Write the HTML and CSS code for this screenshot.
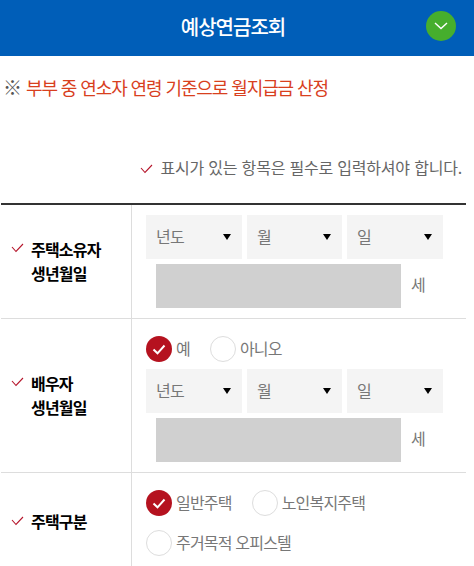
FILE: index.html
```html
<!DOCTYPE html>
<html lang="ko">
<head>
  <meta charset="UTF-8" />
  <meta name="viewport" content="width=device-width, initial-scale=1.0"/>
  <title>예상연금조회</title>
  <link rel="stylesheet" href="styles.css">
</head>
<body>

  <header class="top">
    <h1>예상연금조회</h1>
    <button class="toggle" aria-label="접기">
      <svg width="14" height="8" viewBox="0 0 14 8"><path d="M1 1l6 5.5L13 1" fill="none" stroke="#fff" stroke-width="1.4"/></svg>
    </button>
  </header>

  <p class="notice"><span class="mark">※</span><span>부부 중 연소자 연령 기준으로 월지급금 산정</span></p>

  <p class="required">
    <svg class="tick" width="13" height="10" viewBox="0 0 13 10"><path d="M1 4l4 4.5L12 1" fill="none" stroke="#b5152b" stroke-width="1.1"/></svg>
    표시가 있는 항목은 필수로 입력하셔야 합니다.
  </p>

  <div class="form">
    <div class="row">
      <div class="label">
        <svg class="tick" width="13" height="10" viewBox="0 0 13 10"><path d="M1 4l4 4.5L12 1" fill="none" stroke="#b5152b" stroke-width="1.1"/></svg>
        <span>주택소유자<br>생년월일</span>
      </div>
      <div class="field">
        <div class="dates">
          <div class="select">년도<i></i></div>
          <div class="select">월<i></i></div>
          <div class="select">일<i></i></div>
        </div>
        <div class="age"><div class="age-box"></div><span>세</span></div>
      </div>
    </div>

    <div class="row">
      <div class="label">
        <svg class="tick" width="13" height="10" viewBox="0 0 13 10"><path d="M1 4l4 4.5L12 1" fill="none" stroke="#b5152b" stroke-width="1.1"/></svg>
        <span>배우자<br>생년월일</span>
      </div>
      <div class="field spouse">
        <div class="radios">
          <label class="radio on"><b><svg width="14" height="11" viewBox="0 0 14 11"><path d="M1.5 5.5l4 3.8L12.5 1.5" fill="none" stroke="#fff" stroke-width="2"/></svg></b><span>예</span></label>
          <label class="radio"><b></b><span>아니오</span></label>
        </div>
        <div class="dates">
          <div class="select">년도<i></i></div>
          <div class="select">월<i></i></div>
          <div class="select">일<i></i></div>
        </div>
        <div class="age"><div class="age-box"></div><span>세</span></div>
      </div>
    </div>

    <div class="row">
      <div class="label">
        <svg class="tick" width="13" height="10" viewBox="0 0 13 10"><path d="M1 4l4 4.5L12 1" fill="none" stroke="#b5152b" stroke-width="1.1"/></svg>
        <span>주택구분</span>
      </div>
      <div class="field house">
        <div class="radios">
          <label class="radio on"><b><svg width="14" height="11" viewBox="0 0 14 11"><path d="M1.5 5.5l4 3.8L12.5 1.5" fill="none" stroke="#fff" stroke-width="2"/></svg></b><span>일반주택</span></label>
          <label class="radio"><b></b><span>노인복지주택</span></label>
          <label class="radio"><b></b><span>주거목적 오피스텔</span></label>
        </div>
      </div>
    </div>
  </div>

</body>
</html>
```

FILE: styles.css
```css
html, body {
  height: 566px;
  overflow: hidden;
}

body {
  margin: 0;
  font-family: "Noto Sans CJK KR", "Noto Sans", sans-serif;
  background: #fff;
  color: #666;
}

.top {
  height: 56px;
  background: #005eb8;
  position: relative;
  padding-right: 8px;
  display: flex;
  align-items: center;
  justify-content: center;
}

.top h1 {
  margin: 0 0 3px;
  font-size: 20px;
  font-weight: 500;
  letter-spacing: -1px;
  color: #fff;
}

.toggle {
  position: absolute;
  left: 426px;
  top: 11px;
  width: 30px;
  height: 30px;
  padding: 0;
  border: none;
  border-radius: 50%;
  background: #46ae2d;
  display: flex;
  align-items: center;
  justify-content: center;
}

.notice {
  margin: 0;
  padding: 19px 0 0 3px;
  height: 74px;
  display: flex;
  line-height: 24px;
  font-size: 18px;
  letter-spacing: -1.1px;
  color: #d8401e;
  box-sizing: border-box;
}

.notice .mark {
  width: 23px;
  font-size: 19px;
  color: #555;
}

.required {
  margin: 0;
  padding-right: 12px;
  height: 73px;
  padding-top: 25px;
  box-sizing: border-box;
  line-height: 24px;
  font-size: 16px;
  letter-spacing: -0.2px;
  text-align: right;
}

.required .tick {
  margin-right: 3px;
}

.form {
  width: 465px;
  margin-left: 1px;
  border-top: 2px solid #333;
}

.row {
  display: flex;
  border-bottom: 1px solid #ddd;
}

.label {
  width: 131px;
  flex: none;
  display: flex;
  align-items: center;
  padding-left: 10px;
  box-sizing: border-box;
  border-right: 1px solid #ddd;
  font-size: 16px;
  font-weight: 700;
  letter-spacing: -0.8px;
  line-height: 24px;
  color: #000;
}

.label .tick {
  margin: 0 7px 3px 0;
  align-self: center;
}

.label span {
  display: block;
  margin-bottom: 2px;
}

.row:nth-child(1) .label .tick,
.row:nth-child(2) .label .tick {
  margin-bottom: 28px;
}

.field {
  flex: 1;
  padding: 10px 0 10px 14px;
}

.field.spouse {
  padding-top: 17px;
}

.field.house {
  padding: 17px 0 15px 14px;
}

.dates {
  display: flex;
  gap: 5px;
}

.select {
  width: 96px;
  height: 44px;
  padding-left: 10px;
  box-sizing: border-box;
  background: #f4f4f4;
  position: relative;
  font-size: 16px;
  letter-spacing: -0.8px;
  line-height: 42px;
  color: #777;
}

.select:nth-child(2) {
  width: 95px;
}

.select i {
  position: absolute;
  right: 11px;
  top: 19px;
  border: 4px solid transparent;
  border-top: 6px solid #000;
  border-bottom: none;
}

.age {
  display: flex;
  align-items: center;
  margin: 5px 0 0 10px;
  font-size: 16px;
  color: #777;
}

.age span {
  line-height: 40px;
  margin-bottom: 4px;
}

.age-box {
  width: 245px;
  height: 44px;
  background: #d0d0d0;
  margin-right: 10px;
}

.radios {
  display: flex;
  flex-wrap: wrap;
  gap: 14px 0;
  margin-bottom: 7px;
}

.house .radios {
  width: 240px;
  margin-bottom: 0;
}

.radio {
  display: flex;
  align-items: center;
  height: 26px;
  margin-right: 20px;
  font-size: 16px;
  letter-spacing: -0.8px;
  color: #777;
}

.radio span {
  margin-bottom: 2px;
}

.radio b {
  width: 26px;
  height: 26px;
  box-sizing: border-box;
  border: 1px solid #ddd;
  border-radius: 50%;
  margin-right: 4px;
  display: flex;
  align-items: center;
  justify-content: center;
}

.radio.on b {
  border: none;
  background: #b5121f;
}
```
